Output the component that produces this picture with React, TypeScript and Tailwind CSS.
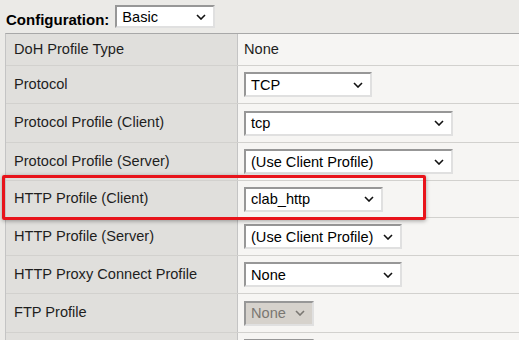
import React from 'react';

interface Row {
  label: string;
  value?: string;
  select?: { text: string; width: number; disabled?: boolean };
  height: number;
}

const rows: Row[] = [
  { label: 'DoH Profile Type', value: 'None', height: 32 },
  { label: 'Protocol', select: { text: 'TCP', width: 128 }, height: 38 },
  { label: 'Protocol Profile (Client)', select: { text: 'tcp', width: 209 }, height: 39 },
  { label: 'Protocol Profile (Server)', select: { text: '(Use Client Profile)', width: 209 }, height: 38 },
  { label: 'HTTP Profile (Client)', select: { text: 'clab_http', width: 139 }, height: 37 },
  { label: 'HTTP Profile (Server)', select: { text: '(Use Client Profile)', width: 158 }, height: 38 },
  { label: 'HTTP Proxy Connect Profile', select: { text: 'None', width: 158 }, height: 38 },
  { label: 'FTP Profile', select: { text: 'None', width: 70, disabled: true }, height: 39 },
  { label: '', select: { text: 'None', width: 70, disabled: true }, height: 38 },
];

function Chevron({ disabled }: { disabled?: boolean }) {
  return (
    <svg width="10" height="6" viewBox="0 0 10 6" className="shrink-0">
      <path
        d="M1 1 L5 5 L9 1"
        fill="none"
        stroke={disabled ? '#7a7772' : '#111'}
        strokeWidth="1.6"
      />
    </svg>
  );
}

function FakeSelect({ text, width, disabled, height = 25 }: { text: string; width: number; disabled?: boolean; height?: number }) {
  return (
    <div
      className={`flex items-center justify-between pl-[5px] pr-[7px] border-2 border-t-[#979797] border-l-[#979797] border-r-[#e0e0e0] border-b-[#e0e0e0] text-[14.6px] leading-[normal] ${
        disabled ? 'bg-[#d6d2cc] text-[#7a7772]' : 'bg-white text-black'
      }`}
      style={{ width, height }}
    >
      <span className="whitespace-nowrap">{text}</span>
      <Chevron disabled={disabled} />
    </div>
  );
}

export default function App() {
  return (
    <div
      className="relative w-[519px] h-[340px] overflow-hidden bg-[#ebeae7] text-[14.6px] text-[#222]"
      style={{ fontFamily: '"Liberation Sans", Arial, sans-serif' }}
    >
      <div className="flex items-end h-[33px] pl-[6px] pb-[5px] gap-[6px]">
        <span className="font-bold text-[15px] text-black leading-none mb-[1px]">Configuration:</span>
        <FakeSelect text="Basic" width={100} height={23} />
      </div>

      <div className="ml-[5px] border-t border-l border-t-[#a8a8a8] border-l-[#c4c4c4]">
        {rows.map((row, i) => (
          <div key={i} className="flex border-b border-[#d2d1ce]" style={{ height: row.height }}>
            <div className="w-[232px] shrink-0 bg-[#e0dfdc] border-r border-[#c4c4c4] flex items-center pl-[8px] text-[#1e1e1e]">
              {row.label}
            </div>
            <div className="flex-1 bg-[#f6f5f3] flex items-center pl-[6px]">
              {row.value && <span className="text-[#1e1e1e]">{row.value}</span>}
              {row.select && (
                <FakeSelect text={row.select.text} width={row.select.width} disabled={row.select.disabled} />
              )}
            </div>
          </div>
        ))}
      </div>

      <div className="absolute left-[2px] top-[175px] w-[424px] h-[45px] border-[3px] border-[#e8141b] rounded-[2px] shadow-[0_1px_4px_rgba(0,0,0,0.35)] pointer-events-none" />
    </div>
  );
}
